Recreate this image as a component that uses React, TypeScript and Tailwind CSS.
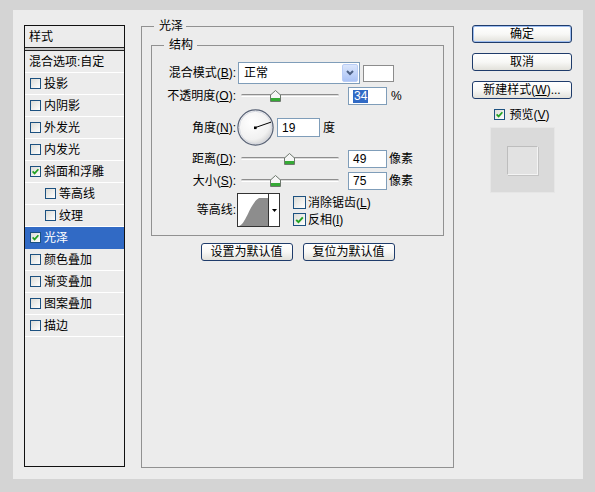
import React from "react";

const cx = (...a: (string | false | undefined | null)[]) => a.filter(Boolean).join(" ");

function U({ c }: { c: string }) {
  return <span className="underline underline-offset-[1px]">{c}</span>;
}

function Check({ on, big }: { on?: boolean; big?: boolean }) {
  return (
    <span
      className={cx(
        "inline-flex shrink-0 items-center justify-center border border-[#1c5180] bg-linear-to-br from-[#dcdcd7] to-white",
        big ? "w-[13px] h-[13px]" : "w-[11px] h-[11px]"
      )}
    >
      {on && (
        <svg width={big ? 9 : 7} height={big ? 8 : 7} viewBox="0 0 7 7">
          <path d="M0.6 3.4 L2.6 5.4 L6.4 1.2" stroke="#21a121" strokeWidth="1.7" fill="none" />
        </svg>
      )}
    </span>
  );
}

function Btn({ children, className, def }: { children: React.ReactNode; className?: string; def?: boolean }) {
  return (
    <div
      className={cx(
        "h-[18px] flex items-center justify-center rounded-[3px] border border-[#1f3c6b] bg-linear-to-b from-white via-[#f8f8f6] to-[#e2e1db] text-[12px] leading-none text-black",
        def && "shadow-[inset_0_0_0_1px_#9dbdf0]",
        className
      )}
    >
      {children}
    </div>
  );
}

function Slider({ value }: { value: number }) {
  return (
    <div className="relative w-[98px] h-[18px] shrink-0">
      <div className="absolute left-0 right-0 top-[7px] h-[3px] rounded-full border-t border-[#8e8e8e] border-b border-b-white bg-[#dcdcdc]" />
      <svg className="absolute top-[3px]" style={{ left: value - 5 }} width="11" height="12" viewBox="0 0 11 12">
        <path d="M5.5 0.5 L10.5 5 L10.5 11.5 L0.5 11.5 L0.5 5 Z" fill="#f6f6f6" stroke="#6d786d" strokeWidth="1" />
        <rect x="1" y="8" width="9" height="3" fill="#35a935" />
      </svg>
    </div>
  );
}

function Field({ children, className }: { children: React.ReactNode; className?: string }) {
  return (
    <div className={cx("h-[18px] shrink-0 border border-[#7f9db9] bg-white flex items-center pl-[4px] text-[12px]", className)}>
      {children}
    </div>
  );
}

function Label({ children }: { children: React.ReactNode }) {
  return <span className="w-[84px] shrink-0 text-right whitespace-nowrap">{children}</span>;
}

const rows: { t: string; on?: boolean; indent?: boolean; sel?: boolean }[] = [
  { t: "投影" },
  { t: "内阴影" },
  { t: "外发光" },
  { t: "内发光" },
  { t: "斜面和浮雕", on: true },
  { t: "等高线", indent: true },
  { t: "纹理", indent: true },
  { t: "光泽", on: true, sel: true },
  { t: "颜色叠加" },
  { t: "渐变叠加" },
  { t: "图案叠加" },
  { t: "描边" },
];

export default function App() {
  return (
    <div className="w-[595px] h-[492px] bg-[#d4d4d4] pt-[10px] pl-[13px] font-['Liberation_Sans','Noto_Sans_CJK_SC',sans-serif] text-[12px] text-black leading-none">
      <div className="w-[570px] h-[469px] bg-[#ececec] flex items-start pl-[11px]">
        {/* Style list */}
        <div className="mt-[15px] w-[101px] h-[442px] border border-[#111] flex flex-col shrink-0">
          <div className="h-[22px] border-b border-[#222] pl-[4px] flex items-center">样式</div>
          <div className="h-[3px] bg-[#c4c4c4] border-b border-[#222]" />
          <div className="h-[22px] border-b border-white pl-[4px] flex items-center whitespace-nowrap">混合选项:自定</div>
          {rows.map((r) => (
            <div
              key={r.t}
              className={cx(
                "h-[22px] flex items-center gap-[3px] border-b whitespace-nowrap",
                r.indent ? "pl-[20px]" : "pl-[5px]",
                r.sel ? "bg-[#316ac5] text-white border-[#316ac5]" : "border-white"
              )}
            >
              <Check on={r.on} />
              <span>{r.t}</span>
            </div>
          ))}
        </div>

        {/* 光泽 group */}
        <fieldset className="ml-[16px] mt-[8px] w-[313px] h-[450px] border border-[#919191] shrink-0">
          <legend className="ml-[12px] pl-[5px] pr-[3px] leading-[17px]">光泽</legend>
          <fieldset className="ml-[9px] mt-[2px] w-[293px] h-[199px] border border-[#919191]">
            <legend className="ml-[12px] pl-[5px] pr-[4px] leading-[17px]">结构</legend>

            {/* blend mode */}
            <div className="mt-[8px] h-[22px] flex items-center">
              <Label>
                混合模式(<U c="B" />):
              </Label>
              <div className="ml-[2px] w-[122px] h-[22px] border border-[#7f9db9] bg-white flex items-center">
                <span className="pl-[5px] flex-1">正常</span>
                <span className="mr-[1px] w-[16px] h-[18px] rounded-[2px] border border-[#b9cdf6] bg-linear-to-b from-[#dbe6fc] to-[#abc3f5] flex items-center justify-center">
                  <svg width="8" height="6" viewBox="0 0 8 6">
                    <path d="M1 1 L4 4 L7 1" stroke="#4d6185" strokeWidth="2" fill="none" />
                  </svg>
                </span>
              </div>
              <div className="ml-[3px] w-[31px] h-[17px] border border-[#8c8c8c] bg-white" />
            </div>

            {/* opacity */}
            <div className="mt-[3px] h-[18px] flex items-center">
              <Label>
                不透明度(<U c="O" />):
              </Label>
              <div className="ml-[5px]">
                <Slider value={34} />
              </div>
              <Field className="ml-[9px] w-[39px]">
                <span className="bg-[#316ac5] text-white px-[1px] leading-[13px]">34</span>
              </Field>
              <span className="ml-[4px]">%</span>
            </div>

            {/* angle */}
            <div className="mt-[4px] h-[37px] flex items-center">
              <Label>
                角度(<U c="N" />):
              </Label>
              <svg className="ml-[1px] shrink-0" width="37" height="37" viewBox="0 0 37 37">
                <defs>
                  <radialGradient id="dg" cx="40%" cy="35%" r="70%">
                    <stop offset="0" stopColor="#ffffff" />
                    <stop offset="0.7" stopColor="#f1f1f1" />
                    <stop offset="1" stopColor="#cdcdcd" />
                  </radialGradient>
                </defs>
                <circle cx="18.5" cy="18.5" r="17.6" fill="url(#dg)" stroke="#566074" strokeWidth="1.2" />
                <circle cx="18.5" cy="18.5" r="16.2" fill="none" stroke="#d5d8e0" strokeWidth="1" />
                <line x1="18.5" y1="18.5" x2="34.1" y2="13.1" stroke="#000" strokeWidth="1" />
                <rect x="17" y="17.5" width="2.6" height="2.6" fill="#000" />
              </svg>
              <Field className="ml-[3px] w-[43px] h-[19px]">19</Field>
              <span className="ml-[3px]">度</span>
            </div>

            {/* distance */}
            <div className="mt-[4px] h-[18px] flex items-center">
              <Label>
                距离(<U c="D" />):
              </Label>
              <div className="ml-[5px]">
                <Slider value={48} />
              </div>
              <Field className="ml-[9px] w-[39px]">49</Field>
              <span className="ml-[2px]">像素</span>
            </div>

            {/* size */}
            <div className="mt-[4px] h-[18px] flex items-center">
              <Label>
                大小(<U c="S" />):
              </Label>
              <div className="ml-[5px]">
                <Slider value={34} />
              </div>
              <Field className="ml-[9px] w-[39px]">75</Field>
              <span className="ml-[2px]">像素</span>
            </div>

            {/* contour */}
            <div className="mt-[3px] h-[34px] flex items-start">
              <div className="h-[34px] flex items-center">
                <Label>等高线:</Label>
              </div>
              <div className="ml-[1px] w-[43px] h-[34px] border border-[#333] bg-white flex shrink-0">
                <svg width="30" height="32" viewBox="0 0 30 32">
                  <path d="M1 32 C 8 30, 12 9, 21 4 L 30 4 L 30 32 Z" fill="#8d8d8d" />
                </svg>
                <div className="flex-1 border-l border-[#333] flex items-center justify-center">
                  <svg width="5" height="3" viewBox="0 0 5 3">
                    <path d="M0 0 H5 L2.5 3 Z" fill="#000" />
                  </svg>
                </div>
              </div>
              <div className="ml-[13px] flex flex-col">
                <div className="mt-[3px] h-[13px] flex items-center gap-[2px] whitespace-nowrap">
                  <Check big />
                  <span>
                    消除锯齿(<U c="L" />)
                  </span>
                </div>
                <div className="mt-[4px] h-[13px] flex items-center gap-[2px] whitespace-nowrap">
                  <Check big on />
                  <span>
                    反相(<U c="I" />)
                  </span>
                </div>
              </div>
            </div>
          </fieldset>

          <div className="mt-[7px] flex justify-center gap-[10px]">
            <Btn className="w-[92px]">设置为默认值</Btn>
            <Btn className="w-[92px]">复位为默认值</Btn>
          </div>
        </fieldset>

        {/* Right column */}
        <div className="ml-[18px] mt-[15px] w-[100px] flex flex-col items-center shrink-0">
          <Btn className="w-[100px]" def>
            确定
          </Btn>
          <Btn className="w-[100px] mt-[10px]">取消</Btn>
          <Btn className="w-[100px] mt-[10px] whitespace-nowrap">
            新建样式(<U c="W" />)...
          </Btn>
          <div className="mt-[9px] h-[13px] flex items-center gap-[4px] whitespace-nowrap">
            <Check on />
            <span>
              预览(<U c="V" />)
            </span>
          </div>
          <div className="mt-[6px] w-[65px] h-[66px] bg-[#dadada] border border-[#e6e6e6] flex items-center justify-center">
            <div className="w-[31px] h-[29px] bg-[#e2e2e2] border-t border-l border-[#bdbdbd] border-b border-r border-b-[#f4f4f4] border-r-[#f4f4f4] shadow-[1px_1px_0_#c4c4c4]" />
          </div>
        </div>
      </div>
    </div>
  );
}
